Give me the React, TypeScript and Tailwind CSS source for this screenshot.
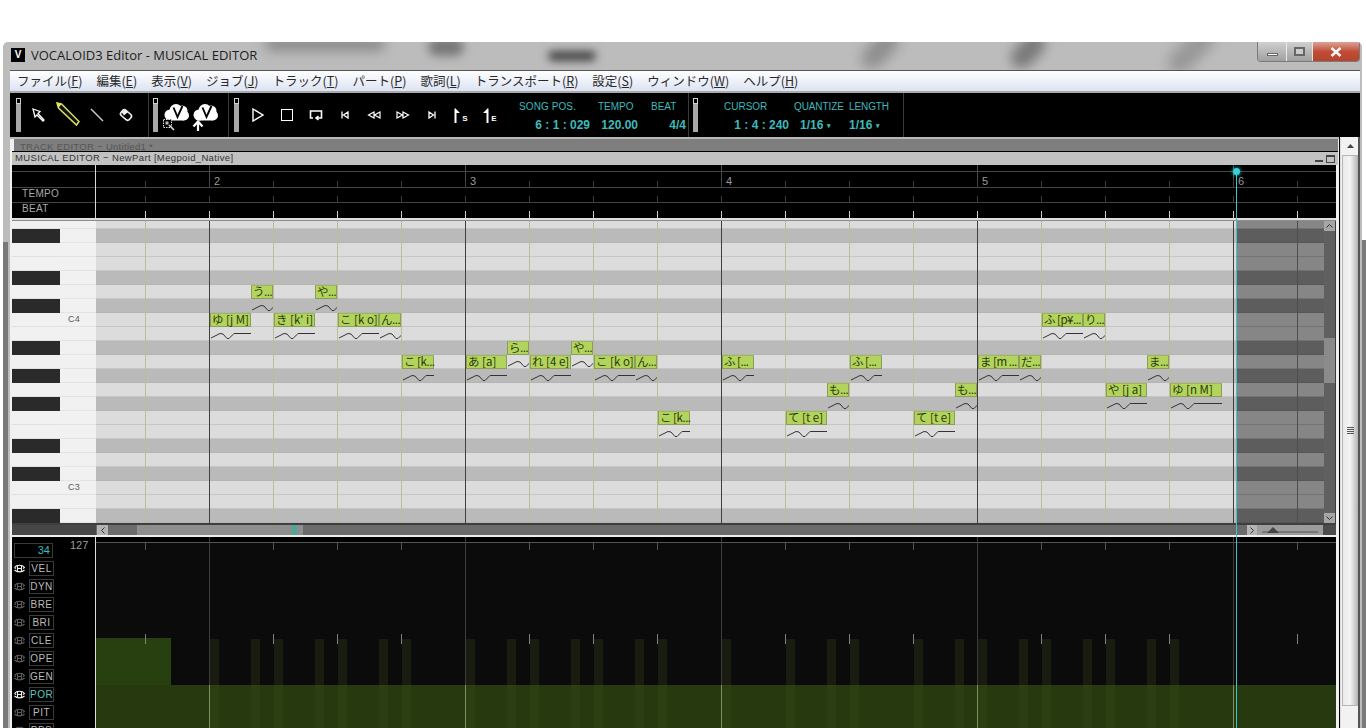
import React from "react";

const jp = "font-['Noto_Sans_CJK_JP',sans-serif]";
const ar = "font-['Liberation_Sans',sans-serif]";

const MENU: [string, string, string][] = [
  ["ファイル(", "F", ")"], ["編集(", "E", ")"], ["表示(", "V", ")"], ["ジョブ(", "J", ")"],
  ["トラック(", "T", ")"], ["パート(", "P", ")"], ["歌詞(", "L", ")"], ["トランスポート(", "R", ")"],
  ["設定(", "S", ")"], ["ウィンドウ(", "W", ")"], ["ヘルプ(", "H", ")"],
];

const ROWS = [0, 1, 0, 0, 1, 0, 1, 0, 0, 1, 0, 1, 0, 1, 0, 0, 1, 0, 1, 0, 0, 1];
const BEATS = Array.from({ length: 19 }, (_, i) => 145 + i * 64);
const BARS = [209, 465, 721, 977, 1233];

const NOTES: [number, number, number, string][] = [
  [251, 285, 22, "う..."], [315, 285, 22, "や..."],
  [210, 313, 41, "ゆ [j M]"], [274, 313, 41, "き [k' i]"], [338, 313, 41, "こ [k o]"], [379, 313, 22, "ん..."],
  [402, 355, 32, "こ [k..."], [466, 355, 41, "あ [a]"], [507, 341, 22, "ら..."], [530, 355, 41, "れ [4 e]"],
  [571, 341, 22, "や..."], [594, 355, 41, "こ [k o]"], [635, 355, 22, "ん..."], [658, 411, 32, "こ [k..."],
  [722, 355, 32, "ふ [..."], [786, 411, 41, "て [t e]"], [827, 383, 22, "も..."], [850, 355, 32, "ふ [..."],
  [914, 411, 41, "て [t e]"], [955, 383, 22, "も..."], [978, 355, 41, "ま [m ..."], [1019, 355, 22, "だ..."],
  [1042, 313, 41, "ふ [p¥..."], [1083, 313, 22, "り..."], [1106, 383, 41, "や [j a]"], [1147, 355, 22, "ま..."],
  [1170, 383, 52, "ゆ [n M]"],
];

const PARAMS = ["VEL", "DYN", "BRE", "BRI", "CLE", "OPE", "GEN", "POR", "PIT", "PBS"];

function Gripper() {
  return (
    <div className="w-[5px] h-[34px] bg-[#a8a8a8] shrink-0 flex flex-col">
      <div className="w-[5px] h-[6px] bg-black border border-[#cfcfcf]" />
    </div>
  );
}

function Cell({ children }: { children: React.ReactNode }) {
  return <div className="w-[29px] h-[24px] flex items-center justify-center shrink-0">{children}</div>;
}

function Cloud({ badge }: { badge: "find" | "up" }) {
  return (
    <svg width="28" height="30" viewBox="0 0 28 30" className="overflow-visible">
      <circle cx="8" cy="15" r="5.5" fill="#fff" />
      <circle cx="14" cy="10.5" r="6.5" fill="#fff" />
      <circle cx="20" cy="11" r="5.5" fill="#fff" />
      <circle cx="22" cy="15.5" r="5" fill="#fff" />
      <path d="M8 14 H22 V20.5 H8 Z" fill="#fff" />
      <path d="M11.5 7.5 L15.5 17 L20.5 6" fill="none" stroke="#000" strokeWidth="1.9" />
      {badge === "find" ? (
        <g>
          <rect x="1.5" y="19.5" width="8" height="8" fill="#000" stroke="#ddd" strokeWidth="1" strokeDasharray="1.5 1" />
          <rect x="3.5" y="21.5" width="3" height="3" fill="#bbb" />
          <path d="M7 25 L12 30" stroke="#ddd" strokeWidth="1.6" />
        </g>
      ) : (
        <path d="M7 31 V23 M2.5 26.5 L7 21.5 L11.5 26.5" fill="none" stroke="#fff" strokeWidth="2.2" />
      )}
    </svg>
  );
}

function Eye({ on }: { on: boolean }) {
  const c = on ? "#f0f0f0" : "#5c5c5c";
  return (
    <svg width="11" height="9" viewBox="0 0 11 9" className="shrink-0">
      <path d="M0.5 3.5 C2.5 0.5 8.5 0.5 10.5 3.5 L9 4.5 M0.5 3.5 L2 4.5 M0.5 6 C3 8.5 8 8.5 10.5 6" fill="none" stroke={c} strokeWidth="1.1" />
      <path d="M3.5 2 V7.5 M7.5 2 V7.5 M3.5 4.5 H7.5" stroke={c} strokeWidth="1.1" />
    </svg>
  );
}

export default function App() {
  return (
    <div className="relative w-[1366px] h-[728px] overflow-hidden bg-white flex flex-col">
      <div className="absolute right-0 top-[240px] bottom-0 w-[4px] bg-[#7a7a7a]" />
      <div className="h-[42px] shrink-0" />
      <div className={`relative flex-1 flex flex-col ml-[3px] mr-[4px] rounded-tl-[5px] rounded-tr-[5px] overflow-hidden bg-[#bcbcbc] ${ar}`}>
        {/* glass */}
        <div className="absolute left-[262px] -top-[5px] w-[120px] h-[14px] rounded-full bg-[#8a8a8a] blur-[6px]" />
        <div className="absolute left-[425px] -top-[4px] w-[36px] h-[18px] rounded-full bg-[#777] blur-[5px]" />
        <div className="absolute left-[545px] top-[9px] w-[48px] h-[10px] rounded-full bg-[#444] blur-[4px]" />
        <div className="absolute left-[855px] -top-[2px] w-[44px] h-[20px] rounded-full bg-[#8a8a8a] blur-[7px] -rotate-45" />
        <div className="absolute left-[1005px] -top-[2px] w-[40px] h-[22px] rounded-full bg-[#7a7a7a] blur-[6px] -rotate-45" />
        <div className="absolute left-[1160px] -top-[2px] w-[56px] h-[22px] rounded-full bg-[#969696] blur-[7px] -rotate-45" />
        <div className="absolute left-0 top-[200px] w-[5px] bottom-0 bg-[#787878]" />

        {/* Title bar */}
        <div className="relative h-[28px] shrink-0 flex items-start">
          <div className="w-[14px] h-[14px] bg-black ml-[8px] mt-[6px] flex items-center justify-center text-white text-[10px] leading-none font-bold shrink-0">V</div>
          <span className="ml-[6px] mt-[5px] text-[13px] leading-[17px] text-[#1d1d1d] font-['Open_Sans',sans-serif] whitespace-nowrap">VOCALOID3 Editor - MUSICAL EDITOR</span>
          <div className="ml-auto mr-[2px] flex h-[20px] rounded-b-[4px] overflow-hidden border border-t-0 border-[#7a7a7a]">
            <div className="w-[29px] bg-gradient-to-b from-[#d0d0d0] to-[#a0a0a0] flex items-center justify-center border-r border-[#e8e8e8]">
              <div className="w-[11px] h-[3px] mt-[5px] bg-white border border-[#666]" />
            </div>
            <div className="w-[26px] bg-gradient-to-b from-[#d0d0d0] to-[#a0a0a0] flex items-center justify-center border-r border-[#e8e8e8]">
              <div className="w-[11px] h-[9px] border-2 border-[#666] bg-[#ccc]" />
            </div>
            <div className="w-[46px] bg-gradient-to-b from-[#d9a296] via-[#c24c36] to-[#b5452e] flex items-center justify-center">
              <svg width="12" height="10" viewBox="0 0 12 10"><path d="M1.5 1 L10.5 9 M10.5 1 L1.5 9" stroke="#f4f4f4" strokeWidth="2.6" /></svg>
            </div>
          </div>
        </div>

        {/* Inner frame */}
        <div className="relative flex-1 flex flex-col ml-[7px] mr-[2px] min-h-0">
          {/* Menu */}
          <div className={`h-[23px] shrink-0 flex items-center gap-[14px] pl-[7px] border-t border-[#555] border-b-2 border-b-[#aaa] bg-gradient-to-b from-white to-[#dce3f2] ${jp} text-[12.5px] text-[#2a2a2a] whitespace-nowrap`}>
            {MENU.map(([a, k, b]) => (
              <span key={k}>
                {a}<span className="underline">{k}</span>{b}
              </span>
            ))}
          </div>

          {/* Toolbar */}
          <div className="h-[44px] shrink-0 bg-black flex items-start text-[#3db9bb]">
            <div className="w-[139px] h-[44px] border-r border-[#3a3a3a] flex items-center pl-[6px] shrink-0">
              <Gripper />
              <div className="flex ml-[3px]">
                <Cell>
                  <svg width="16" height="16" viewBox="0 0 16 16"><path d="M2 2 L9 4.5 L7 6.5 L13 13 L12 14 L6 8 L4 10 Z" fill="#000" stroke="#fff" strokeWidth="1.3" /></svg>
                </Cell>
                <Cell>
                  <svg width="24" height="24" viewBox="0 0 24 24" className="overflow-visible"><path d="M1 0 L5.5 1 L23 18.5 L20.5 22 L2.5 5 Z" fill="#111" stroke="#d8dc5c" strokeWidth="1.5" /><path d="M1 0 L5.5 1 L2.5 5 Z" fill="#e6e864" /></svg>
                </Cell>
                <Cell>
                  <svg width="16" height="16" viewBox="0 0 16 16"><path d="M2 2 L14 14" stroke="#ccc" strokeWidth="1.4" /></svg>
                </Cell>
                <Cell>
                  <svg width="16" height="16" viewBox="0 0 16 16"><rect x="2.5" y="4.5" width="11" height="7" rx="2.5" transform="rotate(40 8 8)" fill="#000" stroke="#eee" strokeWidth="1.6" /><path d="M3.5 5 L7 2.5 L10 5 L6 8.5 Z" fill="#eee" /></svg>
                </Cell>
              </div>
            </div>
            <div className="w-[80px] h-[44px] border-r border-[#3a3a3a] flex items-center pl-[4px] shrink-0">
              <Gripper />
              <div className="flex ml-[3px]">
                <Cell><Cloud badge="find" /></Cell>
                <Cell><Cloud badge="up" /></Cell>
              </div>
            </div>
            <div className="w-[460px] h-[44px] border-r border-[#3a3a3a] flex items-center pl-[5px] shrink-0">
              <Gripper />
              <div className="flex ml-[4px]">
                <Cell><svg width="14" height="14" viewBox="0 0 14 14"><path d="M2 1 L12 7 L2 13 Z" fill="none" stroke="#fff" strokeWidth="1.4" /></svg></Cell>
                <Cell><div className="w-[12px] h-[12px] border-[1.5px] border-white" /></Cell>
                <Cell><svg width="14" height="12" viewBox="0 0 14 12"><path d="M4 9 H1.5 V2 H12.5 V9 H8 M9.5 7 L7 9 L9.5 11" fill="none" stroke="#fff" strokeWidth="1.6" /></svg></Cell>
                <Cell><svg width="8" height="8" viewBox="0 0 8 8"><path d="M1 0.5 V7.5 M7 1 L2.5 4 L7 7 Z" fill="none" stroke="#fff" strokeWidth="1.3" /></svg></Cell>
                <Cell><svg width="14" height="8" viewBox="0 0 14 8"><path d="M7 1 L1.5 4 L7 7 Z M13 1 L7.5 4 L13 7 Z" fill="none" stroke="#fff" strokeWidth="1.2" /></svg></Cell>
                <Cell><svg width="14" height="8" viewBox="0 0 14 8"><path d="M1 1 L6.5 4 L1 7 Z M7 1 L12.5 4 L7 7 Z" fill="none" stroke="#fff" strokeWidth="1.2" /></svg></Cell>
                <Cell><svg width="8" height="8" viewBox="0 0 8 8"><path d="M7 0.5 V7.5 M1 1 L5.5 4 L1 7 Z" fill="none" stroke="#fff" strokeWidth="1.3" /></svg></Cell>
                <Cell>
                  <div className="flex items-end gap-[1px]">
                    <svg width="8" height="15" viewBox="0 0 8 15"><path d="M2 0 L7 5 L3.5 5 V15 H1.5 V1 Z" fill="#fff" /></svg>
                    <span className="text-[8px] leading-[8px] font-bold text-white">S</span>
                  </div>
                </Cell>
                <Cell>
                  <div className="flex items-end gap-[1px]">
                    <svg width="8" height="15" viewBox="0 0 8 15"><path d="M6 0 L1 5 L4.5 5 V15 H6.5 V1 Z" fill="#fff" /></svg>
                    <span className="text-[8px] leading-[8px] font-bold text-white">E</span>
                  </div>
                </Cell>
              </div>
              <div className="flex ml-[15px] h-[44px] pt-[8px]">
                <div className="w-[71px] flex flex-col">
                  <span className="text-[10px] leading-[12px] whitespace-nowrap tracking-[0.1px]">SONG POS.</span>
                  <span className="mt-[5px] text-[12px] leading-[14px] font-bold text-right whitespace-nowrap">6 : 1 : 029</span>
                </div>
                <div className="w-[40px] ml-[8px] flex flex-col">
                  <span className="text-[10px] leading-[12px]">TEMPO</span>
                  <span className="mt-[5px] text-[12px] leading-[14px] font-bold text-right">120.00</span>
                </div>
                <div className="w-[35px] ml-[13px] flex flex-col">
                  <span className="text-[10px] leading-[12px]">BEAT</span>
                  <span className="mt-[5px] text-[12px] leading-[14px] font-bold text-right">4/4</span>
                </div>
              </div>
            </div>
            <div className="w-[215px] h-[44px] border-r border-[#3a3a3a] flex items-center pl-[4px] shrink-0">
              <Gripper />
              <div className="flex ml-[26px] h-[44px] pt-[8px]">
                <div className="w-[65px] flex flex-col">
                  <span className="text-[10px] leading-[12px]">CURSOR</span>
                  <span className="mt-[5px] text-[12px] leading-[14px] font-bold text-right whitespace-nowrap">1 : 4 : 240</span>
                </div>
                <div className="w-[49px] ml-[5px] flex flex-col">
                  <span className="text-[10px] leading-[12px] tracking-[-0.1px]">QUANTIZE</span>
                  <span className="mt-[5px] pl-[6px] text-[12px] leading-[14px] font-bold whitespace-nowrap">1/16 <span className="text-[7px] align-middle">▾</span></span>
                </div>
                <div className="w-[38px] ml-[6px] flex flex-col">
                  <span className="text-[10px] leading-[12px] tracking-[-0.1px]">LENGTH</span>
                  <span className="mt-[5px] text-[12px] leading-[14px] font-bold whitespace-nowrap">1/16 <span className="text-[7px] align-middle">▾</span></span>
                </div>
              </div>
            </div>
          </div>

          {/* MDI */}
          <div className="flex-1 flex min-h-0 bg-[#f0f0f0]">
            <div className="w-[1329px] shrink-0 flex flex-col pl-[2px] pr-[1px]">
              <div className="h-[2px] shrink-0 -ml-[2px] -mr-[1px] bg-[#b8b8b8]" />
              <div className="h-[12px] shrink-0 ml-[2px] bg-[#7e7e7e] pl-[6px] pt-[2px] text-[9.5px] leading-[12px] text-[#555] tracking-[0.3px] whitespace-nowrap overflow-hidden">TRACK EDITOR − Untitled1 *</div>
              <div className="h-[1px] shrink-0 bg-black" />
              <div className="h-[13px] shrink-0 bg-[#c2c2c2] pl-[3px] text-[9.5px] leading-[11px] text-[#333] tracking-[0.35px] whitespace-nowrap flex items-center">
                <span className="-mt-[2px]">MUSICAL EDITOR − NewPart [Megpoid_Native]</span>
                <div className="ml-auto mr-[3px] flex items-center gap-[3px]">
                  <div className="w-[8px] h-[2px] mt-[4px] bg-[#444]" />
                  <div className="w-[9px] h-[8px] border border-[#444] border-t-2" />
                </div>
              </div>

              <div className="relative w-[1324px] flex-1 flex flex-col min-h-0">
                {/* Ruler */}
                <div className="h-[53px] shrink-0 bg-black flex flex-col text-[#a8a8a8] text-[10px] relative">
                  <div className="h-[7px] border-b border-[#444] shrink-0" />
                  <div className="h-[16px] border-b border-[#444] shrink-0" />
                  <div className="h-[15px] border-b border-[#444] shrink-0 pl-[10px] leading-[12px] tracking-[0.3px]">TEMPO</div>
                  <div className="flex-1 pl-[10px] leading-[12px] tracking-[0.3px]">BEAT</div>
                  <div className="absolute left-[83px] top-0 bottom-0 w-[1px] bg-[#d8d8d8]" />
                  {BARS.map((x) => (
                    <div key={x} className="absolute top-0 h-[22px] w-[1px] bg-[#4a4a4a]" style={{ left: x - 12 }} />
                  ))}
                  {[2, 3, 4, 5, 6].map((n, i) => (
                    <span key={n} className="absolute top-[10px] text-[11px] leading-[13px] text-[#9a9a9a]" style={{ left: BARS[i] - 12 + 5 }}>{n}</span>
                  ))}
                  {BEATS.map((x) => (
                    <React.Fragment key={x}>
                      <div className="absolute top-[16px] h-[6px] w-[1px] bg-[#3e3e3e]" style={{ left: x - 12 }} />
                      <div className="absolute top-[31px] h-[7px] w-[1px] bg-[#3e3e3e]" style={{ left: x - 12 }} />
                      <div className="absolute top-[46px] h-[7px] w-[1px] bg-[#cfcfcf]" style={{ left: x - 12 }} />
                    </React.Fragment>
                  ))}
                </div>
                <div className="h-[2px] shrink-0 bg-[#dedede]" />
                <div className="h-[1px] shrink-0 bg-[#8c8c8c]" />

                {/* Piano roll */}
                <div className="h-[302px] shrink-0 flex">
                  <div className="w-[84px] shrink-0 flex flex-col">
                    {ROWS.map((k, i) => (
                      <div key={i} className={`flex shrink-0 ${i === 0 ? "h-[8px]" : "h-[14px]"} bg-[#f1f1f1]`}>
                        {k ? <div className="w-[48px] bg-[#2a2a2a]" /> : <div className="w-[48px] border-b border-[#e0e0e0]" />}
                        <div className={`flex-1 border-b border-[#e4e4e4] text-[9px] leading-[12px] text-[#5a5a5a] pl-[8px] tracking-[0.3px]`}>
                          {i === 7 ? "C4" : i === 19 ? "C3" : ""}
                        </div>
                      </div>
                    ))}
                  </div>
                  <div className="relative w-[1228px] shrink-0 flex flex-col">
                    {ROWS.map((k, i) => (
                      <div key={i} className={`flex shrink-0 ${i === 0 ? "h-[8px]" : "h-[14px]"}`}>
                        <div className={`flex-1 border-b ${k ? "bg-[#bababa] border-[#b4b4b4]" : "bg-[#dcdcdc] border-[#c6c6c6]"}`} />
                        <div className={`w-[88px] border-b ${k ? "bg-[#5d5d5d] border-[#565656]" : "bg-[#868686] border-[#737373]"}`} />
                      </div>
                    ))}
                    {BEATS.map((x) => (
                      <div key={x} className={`absolute top-0 bottom-0 w-[1px] ${BARS.includes(x) ? "bg-[#3f3f3f]" : x > 1236 ? "bg-[#4e4e4e]" : "bg-[#bcbc98]"}`} style={{ left: x - 96 }} />
                    ))}
                    {NOTES.map(([x, y, w, t]) => (
                      <React.Fragment key={`${x}-${y}`}>
                        <div
                          className={`absolute h-[14px] bg-[#b3d45c] border border-[#8aa05a] border-t-[#9cb858] text-[11.5px] leading-[11px] text-[#2c3a10] pl-[1px] whitespace-nowrap ${jp} ${t.endsWith("...") ? "tracking-[-0.5px]" : "tracking-normal"}`}
                          style={{ left: x - 96, top: y - 221, width: w }}
                        >
                          {t}
                        </div>
                        <svg className="absolute" style={{ left: x - 96, top: y + 14 - 221 }} width={w} height={14} viewBox={`0 0 ${w} 14`}>
                          <path d="M1 11 L10 6.5 L13 7 L17 11.5 L19 11.5 L24 6.5 L60 6.5" fill="none" stroke="#333" strokeWidth="1" />
                        </svg>
                      </React.Fragment>
                    ))}
                  </div>
                  <div className="w-[11px] shrink-0 bg-[#606060] flex flex-col">
                    <div className="h-[10px] bg-[#a6a6a6] flex items-center justify-center">
                      <svg width="7" height="4" viewBox="0 0 7 4"><path d="M0.5 3.5 L3.5 0.5 L6.5 3.5" fill="none" stroke="#333" /></svg>
                    </div>
                    <div className="h-[107px]" />
                    <div className="h-[45px] bg-[#8b8b8b]" />
                    <div className="flex-1" />
                    <div className="h-[10px] bg-[#a6a6a6] flex items-center justify-center">
                      <svg width="7" height="4" viewBox="0 0 7 4"><path d="M0.5 0.5 L3.5 3.5 L6.5 0.5" fill="none" stroke="#333" /></svg>
                    </div>
                  </div>
                  <div className="w-[1px] shrink-0 bg-[#3a3a3a]" />
                </div>

                {/* Horizontal scroll */}
                <div className="h-[14px] shrink-0 flex flex-col">
                  <div className="h-[12px] flex border-t-2 border-[#3f3f3f] bg-[#6b6b6b]">
                    <div className="w-[84px] bg-[#474747] shrink-0" />
                    <div className="w-[11px] ml-[1px] bg-[#b4b4b4] shrink-0 flex items-center justify-center">
                      <svg width="4" height="7" viewBox="0 0 4 7"><path d="M3.5 0.5 L0.5 3.5 L3.5 6.5" fill="none" stroke="#333" /></svg>
                    </div>
                    <div className="w-[29px] shrink-0" />
                    <div className="relative w-[166px] bg-[#8e8e8e] shrink-0">
                      <div className="absolute left-[155px] top-0 bottom-0 w-[5px] bg-[#4fa79c]" />
                    </div>
                    <div className="flex-1" />
                    <div className="w-[10px] bg-[#b4b4b4] shrink-0 flex items-center justify-center">
                      <svg width="4" height="7" viewBox="0 0 4 7"><path d="M0.5 0.5 L3.5 3.5 L0.5 6.5" fill="none" stroke="#333" /></svg>
                    </div>
                    <div className="w-[66px] bg-[#9c9c9c] shrink-0 flex items-center pl-[5px]">
                      <svg width="58" height="8" viewBox="0 0 58 8"><path d="M0 6 H56" stroke="#555" /><path d="M5 7 L11 1 L17 7 Z" fill="#444" /></svg>
                    </div>
                    <div className="w-[13px] bg-[#4c4c4c] shrink-0" />
                  </div>
                  <div className="h-[2px] bg-[#eeeeee]" />
                </div>

                {/* Control track */}
                <div className="flex-1 flex min-h-0 bg-black">
                  <div className="w-[84px] shrink-0 border-r border-[#dcdcdc] pt-[6px] pl-[2px]">
                    <div className="flex items-start">
                      <div className="w-[39px] h-[15px] border border-[#3a3a3a] text-right pr-[2px] text-[11px] leading-[13px] text-[#3db9bb]">34</div>
                      <span className="ml-[17px] -mt-[5px] text-[11px] leading-[14px] text-[#9c9c9c]">127</span>
                    </div>
                    <div className="flex flex-col gap-[3px] mt-[3px]">
                      {PARAMS.map((p) => (
                        <div key={p} className="flex items-center gap-[4px] h-[15px] shrink-0">
                          <Eye on={p === "VEL" || p === "POR"} />
                          <div className={`w-[25px] h-[15px] border border-[#3a3a3a] text-center text-[10px] leading-[13px] tracking-[0.5px] ${p === "POR" ? "text-[#58c8c0]" : "text-[#bcbcbc]"}`}>{p}</div>
                        </div>
                      ))}
                    </div>
                  </div>
                  <div className="relative flex-1 flex flex-col">
                    <div className="h-[6px] shrink-0 bg-black border-b border-[#555]" />
                    <div className="flex-1 bg-[#0b0b0b] relative overflow-hidden">
                      <div className="absolute left-0 top-[95px] w-[75px] bottom-0 bg-[#28400f]" />
                      <div className="absolute left-0 right-0 top-[142px] bottom-0 bg-[#26390f]" />
                      {NOTES.map(([x, y]) => (
                        <div key={`${x}-${y}`} className="absolute top-[96px] bottom-0 w-[9px] bg-[#3f5220]/25" style={{ left: x - 96 }} />
                      ))}
                      {BEATS.map((x) => (
                        <React.Fragment key={x}>
                          <div className="absolute top-0 h-[7px] w-[1px] bg-[#555]" style={{ left: x - 96 }} />
                          <div className="absolute top-[91px] h-[10px] w-[1px] bg-[#808080]" style={{ left: x - 96 }} />
                        </React.Fragment>
                      ))}
                    </div>
                    {BARS.map((x) => (
                      <div key={x} className="absolute top-0 bottom-[43px] w-[1px] bg-[#3d3d3d]" style={{ left: x - 96 }} />
                    ))}
                    {BARS.map((x) => (
                      <div key={x} className="absolute h-[43px] bottom-0 w-[1px] bg-[#7f8a62]" style={{ left: x - 96 }} />
                    ))}
                  </div>
                </div>

                {/* Play cursor */}
                <div className="absolute left-[1224px] top-[6px] bottom-0 w-[1px] bg-[#3ec4c8]" />
                <div className="absolute left-[1221px] top-[3px] w-[7px] h-[7px] rounded-full bg-[#38d0d4] shadow-[0_0_4px_#38d0d4]" />
              </div>
            </div>

            {/* Right scroll */}
            <div className="w-[21px] shrink-0 flex border-l border-black">
              <div className="w-[1px] bg-[#dddddd]" />
              <div className="w-[1px]" />
              <div className="w-[16px] flex flex-col bg-[#f2f2f2]">
                <div className="h-[18px] flex items-center justify-center shrink-0">
                  <svg width="7" height="4" viewBox="0 0 7 4"><path d="M3.5 0 L7 4 H0 Z" fill="#444" /></svg>
                </div>
                <div className="h-[551px] shrink-0 bg-gradient-to-r from-[#eaeaea] via-[#f5f5f5] to-[#bcbcbc] border border-[#b5b5b5] flex items-center justify-center">
                  <div className="flex flex-col gap-[1px] w-[7px]">
                    <div className="h-[1px] bg-[#555]" />
                    <div className="h-[1px] bg-[#555]" />
                    <div className="h-[1px] bg-[#555]" />
                    <div className="h-[1px] bg-[#555]" />
                  </div>
                </div>
              </div>
              <div className="flex-1 bg-[#555]" />
            </div>
          </div>
        </div>
      </div>
    </div>
  );
}
